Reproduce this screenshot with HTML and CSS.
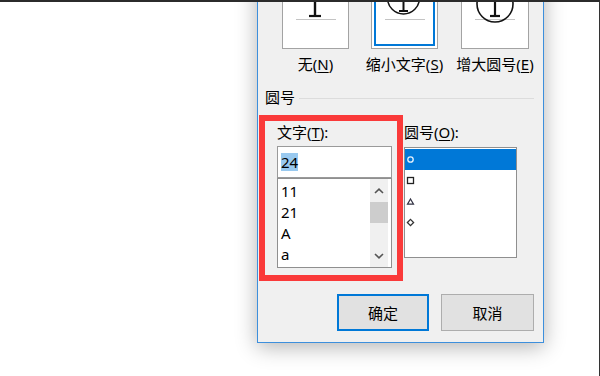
FILE: index.html
```html
<!DOCTYPE html>
<html lang="zh-CN">
<head>
<meta charset="utf-8">
<title>带圈字符</title>
<link rel="stylesheet" href="styles.css">
</head>
<body>
<div class="screen">
  <div class="dialog">
    <div class="previews">
      <div class="opt">
        <div class="pbox">
          <svg width="65" height="58" viewBox="0 0 65 58">
            <line x1="13" y1="29.5" x2="53" y2="29.5" stroke="#c4c4c4" stroke-width="1"/>
            <line x1="32" y1="0" x2="32" y2="27" stroke="#111" stroke-width="2.4"/>
            <line x1="26" y1="26" x2="38" y2="26" stroke="#111" stroke-width="2.2"/>
          </svg>
        </div>
        <div class="olabel">无(<u>N</u>)</div>
      </div>
      <div class="opt">
        <div class="pbox on">
          <svg width="65" height="58" viewBox="0 0 65 58">
            <line x1="13" y1="29.5" x2="53" y2="29.5" stroke="#c4c4c4" stroke-width="1"/>
            <circle cx="31.5" cy="8" r="16" fill="none" stroke="#111" stroke-width="1.5"/>
            <line x1="31.5" y1="0" x2="31.5" y2="22" stroke="#111" stroke-width="2"/>
            <line x1="27" y1="21" x2="36" y2="21" stroke="#111" stroke-width="2"/>
          </svg>
        </div>
        <div class="olabel">缩小文字(<u>S</u>)</div>
      </div>
      <div class="opt last">
        <div class="pbox">
          <svg width="66" height="58" viewBox="0 0 66 58">
            <line x1="13" y1="29.5" x2="53" y2="29.5" stroke="#c4c4c4" stroke-width="1"/>
            <circle cx="33" cy="14" r="18" fill="none" stroke="#111" stroke-width="1.6"/>
            <line x1="33" y1="0" x2="33" y2="27" stroke="#111" stroke-width="2.2"/>
            <line x1="28" y1="26" x2="38" y2="26" stroke="#111" stroke-width="2.2"/>
          </svg>
        </div>
        <div class="olabel">增大圆号(<u>E</u>)</div>
      </div>
    </div>

    <div class="group"><span>圆号</span><div class="rule"></div></div>

    <div class="cols">
      <div class="col left">
        <div class="flabel">文字(<u>T</u>):</div>
        <div class="input"><span class="sel">24</span></div>
        <div class="list">
          <ul class="items">
            <li>11</li>
            <li>21</li>
            <li>A</li>
            <li>a</li>
          </ul>
          <div class="sb">
            <div class="arrow">
              <svg width="10" height="6" viewBox="0 0 10 6"><polyline points="1,5 5,1.2 9,5" fill="none" stroke="#555" stroke-width="1.6"/></svg>
            </div>
            <div class="thumb"></div>
            <div class="track"></div>
            <div class="arrow">
              <svg width="10" height="6" viewBox="0 0 10 6"><polyline points="1,1 5,4.8 9,1" fill="none" stroke="#555" stroke-width="1.6"/></svg>
            </div>
          </div>
        </div>
      </div>
      <div class="col right">
        <div class="flabel">圆号(<u>O</u>):</div>
        <ul class="list2">
          <li class="on"><svg width="9" height="9" viewBox="0 0 9 9"><circle cx="4.5" cy="4.5" r="2.7" fill="none" stroke="#e8f2fc" stroke-width="1.3"/></svg></li>
          <li><svg width="9" height="9" viewBox="0 0 9 9"><rect x="1.5" y="1.5" width="6" height="6" fill="none" stroke="#222" stroke-width="1.3"/></svg></li>
          <li><svg width="9" height="9" viewBox="0 0 9 9"><path d="M4.5 2 L7.5 7.2 L1.5 7.2 Z" fill="none" stroke="#334" stroke-width="1.2"/></svg></li>
          <li><svg width="9" height="9" viewBox="0 0 9 9"><path d="M4.5 1.4 L7.6 4.5 L4.5 7.6 L1.4 4.5 Z" fill="none" stroke="#333" stroke-width="1.3"/></svg></li>
        </ul>
      </div>
    </div>

    <div class="buttons">
      <button class="btn default">确定</button>
      <button class="btn cancel">取消</button>
    </div>

    <div class="mark"></div>
  </div>
</div>
</body>
</html>
```

FILE: styles.css
```css
* { box-sizing: border-box; }
html, body { margin: 0; padding: 0; }
body {
  background: #fff;
  font-family: "Noto Sans", "Noto Sans CJK SC", sans-serif;
  font-size: 15px;
  color: #000;
}
u { text-decoration: underline; text-underline-offset: 2px; text-decoration-thickness: 1px; }

.screen {
  width: 600px;
  height: 376px;
  overflow: hidden;
  border-top: 2px solid #2b2b2b;
  border-right: 1px solid #333;
  padding-left: 257px;
}

.dialog {
  position: relative;
  width: 287px;
  margin-top: -30px;
  background: #f0f0f0;
  border: 1px solid #3d8fdc;
  box-shadow: 0 4px 20px rgba(0, 0, 0, 0.3);
  padding: 16px 9px 11px 0;
}

.previews { display: flex; gap: 22px; padding-left: 24px; }
.opt { width: 67px; display: flex; flex-direction: column; align-items: center; }
.opt.last { width: 68px; margin-left: 1px; }
.pbox { width: 100%; height: 60px; background: #fff; border: 1px solid #a3a3a3; }
.pbox svg { display: block; }
.pbox.on { box-shadow: inset 0 0 0 2px #fff, inset 0 0 0 4px #0078d7; }
.olabel { margin-top: 6px; line-height: 18px; white-space: nowrap; }

.group { display: flex; align-items: center; gap: 4px; margin-top: 15px; padding-left: 7px; line-height: 18px; }
.rule { flex: 1; height: 1px; background: #dcdcdc; margin-top: 2px; }

.cols { display: flex; gap: 12px; margin-top: 17px; padding-left: 19px; }
.col.left { width: 115px; }
.col.right { width: 113px; }
.flabel { line-height: 18px; white-space: nowrap; }

.input {
  margin-top: 5px;
  height: 32px;
  border: 1px solid #9a9a9a;
  background: #fff;
  display: flex;
  align-items: center;
  padding-left: 3px;
}
.sel { background: #99c9ef; line-height: 18px; }

.list {
  height: 90px;
  border: 1px solid #8f8f8f;
  background: #fff;
  display: flex;
  padding-right: 3px;
}
.items { flex: 1; margin: 0; padding: 2px 0 0 3px; list-style: none; }
.items li { height: 21px; line-height: 21px; }
.sb { width: 18px; background: #f0f0f0; display: flex; flex-direction: column; }
.sb .arrow { height: 23px; display: flex; align-items: center; justify-content: center; }
.sb .arrow svg { display: block; }
.sb .thumb { height: 21px; background: #cdcdcd; }
.sb .track { flex: 1; }

.list2 {
  margin: 6px 0 0;
  padding: 1px 0 0;
  list-style: none;
  height: 111px;
  border: 1px solid #8f8f8f;
  background: #fff;
}
.list2 li { height: 21px; display: flex; align-items: center; padding-left: 1px; }
.list2 li svg { display: block; }
.list2 li.on { background: #0078d7; }

.buttons { display: flex; justify-content: flex-end; gap: 12px; margin-top: 26px; }
.btn {
  width: 92px;
  height: 37px;
  padding: 0;
  font: inherit;
  color: #000;
  background: #e1e1e1;
  border: 1px solid #adadad;
}
.btn.cancel { width: 93px; }
.btn.default { border: 2px solid #0078d7; }

.mark {
  position: absolute;
  left: 1px;
  top: 142px;
  width: 144px;
  height: 166px;
  border: 6px solid #fa3a3a;
  pointer-events: none;
}
```
